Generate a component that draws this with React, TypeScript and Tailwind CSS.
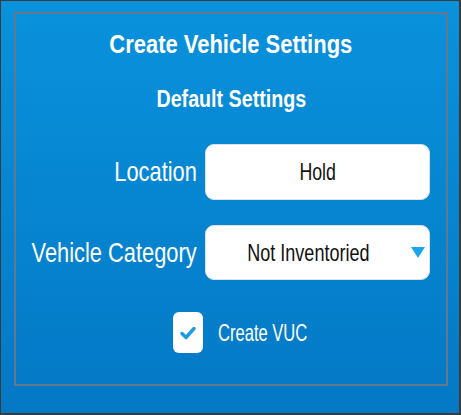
import React from "react";

const font = { fontFamily: '"Liberation Sans", Arial, sans-serif' };

export default function App() {
  return (
    <div
      className="w-[461px] h-[415px] border-t border-l border-r-2 border-b-2 border-[#3b3b3b] bg-gradient-to-b from-[#0a92dc] to-[#0478c5] pt-[11px] pl-[13px]"
      style={font}
    >
      <div className="w-[434px] h-[374px] border-2 border-[#64778b] flex flex-col">
        <div className="mt-[17px] h-[26px] flex justify-center">
          <span className="inline-block text-[26px] leading-[26px] font-bold text-white scale-x-[0.845] whitespace-nowrap">
            Create Vehicle Settings
          </span>
        </div>
        <div className="mt-[30px] h-[24px] flex justify-center">
          <span className="inline-block text-[24px] leading-[24px] font-bold text-white scale-x-[0.82] whitespace-nowrap">
            Default Settings
          </span>
        </div>

        <div className="mt-[33px] grid grid-cols-[181px_225px] gap-x-[8px] gap-y-[25px]">
          <div className="h-[56px] flex items-center justify-end">
            <span className="inline-block origin-right scale-x-[0.78] text-[28px] leading-[28px] text-white whitespace-nowrap">
              Location
            </span>
          </div>
          <div className="h-[56px] rounded-[9px] bg-white border border-[#dde2e8] flex items-center justify-center">
            <span className="inline-block scale-x-[0.74] text-[24px] leading-[24px] text-[#111111] whitespace-nowrap">
              Hold
            </span>
          </div>

          <div className="h-[55px] flex items-center justify-end">
            <span className="inline-block origin-right scale-x-[0.78] text-[28px] leading-[28px] text-white whitespace-nowrap">
              Vehicle Category
            </span>
          </div>
          <div className="h-[55px] rounded-[9px] bg-white border border-[#dde2e8] flex items-center pr-[4px]">
            <div className="flex-1 flex justify-center">
              <span className="inline-block scale-x-[0.75] text-[24px] leading-[24px] text-[#111111] whitespace-nowrap">
                Not Inventoried
              </span>
            </div>
            <svg width="14" height="11" viewBox="0 0 14 11" className="block">
              <polygon points="0,0 14,0 7,11" fill="#1ba5ec" />
            </svg>
          </div>
        </div>

        <div className="mt-[32px] ml-[157px] flex items-center">
          <div className="w-[30px] h-[41px] rounded-[6px] bg-white flex items-center justify-center">
            <svg width="16" height="14" viewBox="0 0 16 14" className="block">
              <polyline
                points="2,7.5 6,11.5 14,2.5"
                fill="none"
                stroke="#1e9be2"
                strokeWidth="3.4"
                strokeLinecap="round"
                strokeLinejoin="round"
              />
            </svg>
          </div>
          <span className="ml-[15px] inline-block origin-left scale-x-[0.69] text-[24px] leading-[24px] text-white whitespace-nowrap">
            Create VUC
          </span>
        </div>
      </div>
    </div>
  );
}
